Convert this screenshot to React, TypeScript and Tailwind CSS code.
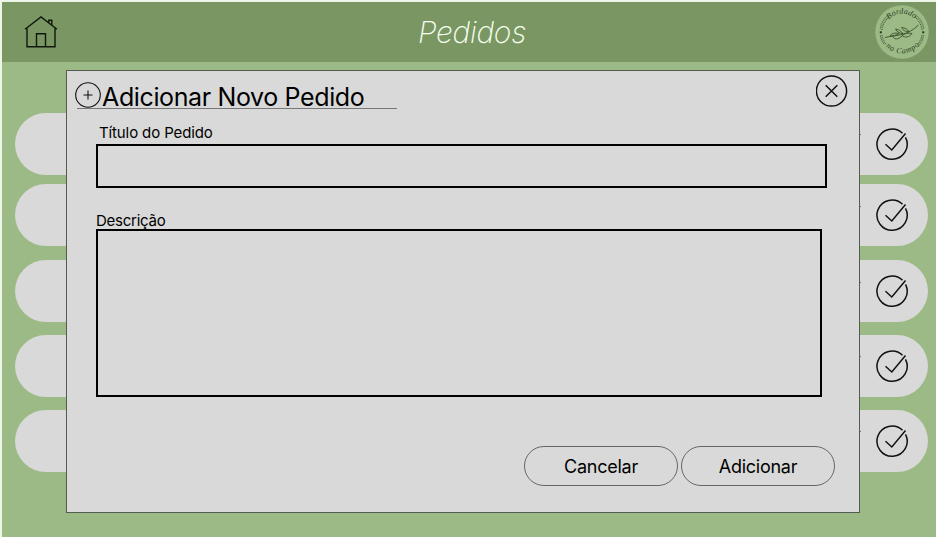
const orders = [
  { id: 1, space: "mt-[51px]" },
  { id: 2, space: "mt-[9.6px]" },
  { id: 3, space: "mt-[13.9px]" },
  { id: 4, space: "mt-[12.9px]" },
  { id: 5, space: "mt-[13px]" },
];

function HomeIcon() {
  return (
    <svg className="h-[34px] w-[34px]" viewBox="0 0 34 34" fill="none" stroke="#10180c" strokeWidth="1.4">
      <path d="M1 14.3 17 2 33 14.3M3 13V31.7H31V13M12.5 31.7V18.7H21.5V31.7M24.8 8V5.2H27.8V10.3" />
    </svg>
  );
}

function CheckIcon() {
  return (
    <svg className="h-9 w-9" viewBox="-0.3 -0.8 36 36" fill="none" stroke="#111" strokeWidth="1.5">
      <path d="M28.2 6.5A15.1 15.1 0 1 0 31.2 10.5" />
      <path d="M11.2 17.5 17.5 23.2 31.2 6.8" />
    </svg>
  );
}

function Logo() {
  return (
    <svg className="h-[54px] w-[54px]" viewBox="0 0 54 54" fill="none">
      <circle cx="27" cy="27" r="26.7" fill="#9cba85" />
      <g stroke="#4a623e" strokeWidth="0.7">
        <path d="M5.2 24A22 22 0 0 1 13.5 9.8M40.5 9.8A22 22 0 0 1 48.8 24M48.8 30A22 22 0 0 1 43 42M5.2 30A22 22 0 0 0 9 39.5" />
        <path d="M7 25A20 20 0 0 1 14 11.8M40 11.8A20 20 0 0 1 47 25M47 30A20 20 0 0 1 42.5 39.6M7 30A20 20 0 0 0 11 39" strokeWidth="1.2" strokeDasharray="1 .8" />
      </g>
      <path
        d="M10 32.5C20 30 32 31.5 43.5 20M15 31C16 28.5 20 27.5 24 28.5C21 30.5 18 31 15 31M28 28.5C26 26 23 24 20.5 24C22 27 25 28.8 28 28.5M34 26.5C32.5 24 29 22.5 26.5 22.5C28 25.5 31 27 34 26.5M18 31.5C19 34.5 23 35 27 31M27 30.5C30 33 34 32.5 37 28.5C33 27.5 30 28.5 27 30.5"
        stroke="#39502f"
        strokeWidth="0.9"
      />
      <rect x="4.8" y="26.3" width="2" height="2" fill="#26361f" />
      <rect x="47.2" y="26.3" width="2" height="2" fill="#26361f" />
      <path id="logo-top" d="M10 22A17.5 17.5 0 0 1 44 22" />
      <path id="logo-bottom" d="M5.5 31A22 22 0 0 0 48.5 31" />
      <g fill="#2b3d24" fontFamily="Liberation Serif, serif" fontStyle="italic" textAnchor="middle">
        <text fontSize="8" letterSpacing="0.1"><textPath href="#logo-top" startOffset="49%">Bordado</textPath></text>
        <text fontSize="8" letterSpacing="0.7"><textPath href="#logo-bottom" startOffset="52%">no Campo</textPath></text>
      </g>
    </svg>
  );
}

function Modal() {
  return (
    <section className="absolute left-[66px] top-[70px] flex h-[443px] w-[794px] flex-col border border-[#555b50] bg-[#d9d9d9] text-black">
      <div className="flex h-[51px] items-start justify-between pl-2 pr-[11px] pt-1">
        <div className="mt-[6px] flex h-[28px] w-[322px] items-start">
          <svg className="h-[28px] w-[27px] shrink-0" viewBox="0 0 27 28" fill="none" stroke="#111" strokeWidth="1.1">
            <path d="M2 27.5H27" stroke="#777" strokeWidth="1" />
            <circle cx="13" cy="14" r="12.3" />
            <path d="M13 9.5V18.5M8.5 14H17.5" />
          </svg>
          <h2 className="h-[28px] w-[295px] whitespace-nowrap border-b border-[#777] text-[25px] leading-[33px] tracking-[-0.37px]">Adicionar Novo Pedido</h2>
        </div>
        <svg className="h-8 w-8" viewBox="0 0 32 32" fill="none" stroke="#111" strokeWidth="1.5">
          <circle cx="15.5" cy="16" r="15.1" />
          <path d="M9.7 10.2 21.3 21.8M21.3 10.2 9.7 21.8" />
        </svg>
      </div>
      <div className="flex flex-col pl-[29px]">
        <label className="h-[22px] pl-[3px] text-[15px] leading-[22px] tracking-[-0.12px]">Título do Pedido</label>
        <div className="h-[44px] w-[731px] border-2 border-black" />
        <label className="mt-[22px] h-[19px] text-[15px] leading-[21px] tracking-[-0.25px]">Descrição</label>
        <div className="h-[168px] w-[726px] border-2 border-black" />
      </div>
      <div className="mt-[49px] flex gap-[3px] pl-[457px]">
        <button className="h-10 w-[154px] rounded-[20px] border border-[#666] text-[18px] tracking-[-0.25px]">Cancelar</button>
        <button className="h-10 w-[154px] rounded-[20px] border border-[#666] text-[18px] tracking-[-0.25px]">Adicionar</button>
      </div>
    </section>
  );
}

export default function App() {
  return (
    <div className="relative h-[537px] w-[936px] overflow-hidden bg-[#edf5e9] pl-[2px] pt-[2px] font-['Inter',sans-serif]">
      <main className="h-[535px] bg-[#9cba85]">
        <header className="flex h-[60px] items-center justify-between bg-[#7a9763] pl-[22px] pr-[7px]">
          <HomeIcon />
          <h1 className="ml-[11px] text-[30px] font-extralight italic tracking-[-0.3px] text-[#f7fff0]">Pedidos</h1>
          <Logo />
        </header>
        <div className="flex flex-col">
          {orders.map((order) => (
            <article key={order.id} className={`${order.space} ml-[13.4px] flex h-[61.9px] w-[913px] items-center justify-end rounded-full bg-[#d9d9d9] pr-[18px]`}>
              <span className="mb-[18px] mr-[13px] h-px w-[2px] bg-[#777]" />
              <CheckIcon />
            </article>
          ))}
        </div>
      </main>
      <Modal />
    </div>
  );
}
